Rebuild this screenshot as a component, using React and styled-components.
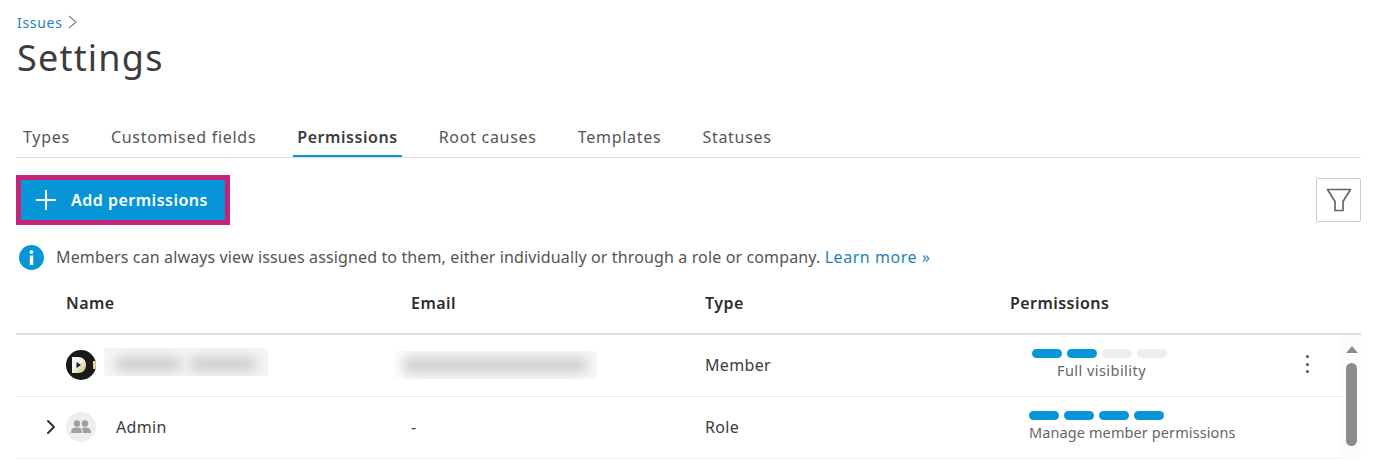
import React from 'react';
import styled, { createGlobalStyle } from 'styled-components';
import { ChevronRight } from 'lucide-react';

const GlobalStyle = createGlobalStyle`
  html, body { margin: 0; padding: 0; background: #fff; overflow: hidden; }
  body { font-family: "Noto Sans", "Open Sans", sans-serif; color: #3c3c3c; }
`;

const Page = styled.div`
  width: 1345px;
  height: 470px;
  padding-left: 16px;
  overflow: hidden;
`;

const Crumbs = styled.div`
  display: flex;
  align-items: center;
  gap: 5px;
  height: 20px;
  padding: 12px 0 0 1px;
  font-size: 14px;
  letter-spacing: 0.7px;
  color: #2a7fb8;
`;

const Title = styled.h1`
  margin: 0;
  height: 46px;
  line-height: 45px;
  padding: 3px 0 0 1px;
  font-size: 36px;
  font-weight: 400;
  letter-spacing: 1.2px;
  color: #3c3c3c;
`;

const Tabs = styled.div`
  display: flex;
  gap: 33px;
  margin-top: 42px;
  height: 34px;
  padding-left: 3px;
  border-bottom: 1px solid #dcdcdc;
`;

const Tab = styled.div`
  height: 34px;
  line-height: 28px;
  padding: 0 4px;
  font-size: 16px;
  letter-spacing: ${p => (p.$active ? 0.55 : 0.72)}px;
  font-weight: ${p => (p.$active ? 600 : 400)};
  color: ${p => (p.$active ? '#3c3c3c' : '#555')};
  box-sizing: border-box;
  border-bottom: ${p => (p.$active ? '2px solid #0696d7' : 'none')};
`;

const Toolbar = styled.div`
  display: flex;
  align-items: center;
  justify-content: space-between;
  margin-top: 17px;
  height: 50px;
`;

const AddButton = styled.button`
  display: flex;
  align-items: center;
  gap: 15px;
  box-sizing: border-box;
  width: 214px;
  height: 50px;
  padding: 0 0 0 15px;
  background: #0696d7;
  border: 5px solid #c4237a;
  color: #fff;
  font: 600 16px "Noto Sans", sans-serif;
  letter-spacing: 0.5px;
`;

const FilterButton = styled.button`
  display: flex;
  align-items: center;
  justify-content: center;
  box-sizing: border-box;
  width: 45px;
  height: 44px;
  margin-bottom: 1px;
  padding: 0;
  background: #fff;
  border: 1px solid #ccc;
  border-radius: 2px;
`;

const Notice = styled.div`
  display: flex;
  align-items: center;
  gap: 12px;
  margin-top: 18px;
  height: 28px;
  padding-left: 3px;
  font-size: 16px;
  letter-spacing: 0.13px;
  color: #555;
`;

const Link = styled.a`
  color: #1f7fbd;
  letter-spacing: 0.55px;
`;

const HeadRow = styled.div`
  display: grid;
  grid-template-columns: 395px 294px 305px 1fr;
  align-items: center;
  height: 64px;
  padding-top: 2px;
  box-sizing: border-box;
  border-bottom: 2px solid #dedede;
  font-size: 16px;
  font-weight: 600;
  letter-spacing: 0.45px;
  color: #2d2d2d;
`;

const HeadName = styled.div`
  padding-left: 50px;
`;

const Body = styled.div`
  display: flex;
`;

const Rows = styled.div`
  width: 1326px;
`;

const Row = styled.div`
  display: grid;
  grid-template-columns: 395px 294px 305px 1fr;
  align-items: center;
  height: 62px;
  padding-bottom: 2px;
  box-sizing: border-box;
  border-bottom: 1px solid #eee;
  font-size: 16px;
  letter-spacing: 0.35px;
  color: #3c3c3c;
`;

const NameCell = styled.div`
  display: flex;
  align-items: center;
  padding-left: 26px;
`;

const Expander = styled.div`
  display: flex;
  width: 24px;
  color: #333;
`;

const Avatar = styled.div`
  display: flex;
  align-items: center;
  justify-content: center;
  flex: none;
  width: 30px;
  height: 30px;
  margin-right: ${p => p.$gap}px;
  border-radius: 50%;
  overflow: hidden;
  background: ${p => (p.$dark ? '#1a1a1c' : '#eee')};
`;

const NameBlur = styled.div`
  display: flex;
  align-items: center;
  justify-content: center;
  gap: 8px;
  box-sizing: border-box;
  width: 164px;
  height: 28px;
  margin-bottom: 6px;
  padding-top: 5px;
  background: #f5f5f5;
  overflow: hidden;
`;

const EmailBlur = styled.div`
  display: flex;
  align-items: center;
  justify-content: center;
  width: 204px;
  height: 28px;
  margin-left: -18px;
  background: linear-gradient(90deg, #fff, #f7f7f7 8%);
  overflow: hidden;
`;

const Smudge = styled.div`
  width: ${p => p.$width}px;
  height: 14px;
  background: #cccccc;
  border-radius: 7px;
  filter: blur(6px);
`;

const Level = styled.div`
  display: inline-flex;
  flex-direction: column;
  align-items: center;
  justify-self: start;
  gap: 2px;
  margin-left: ${p => p.$indent}px;
  font-size: 14.5px;
  letter-spacing: ${p => p.$tracking}px;
  text-indent: ${p => p.$nudge || 0}px;
  color: #666;
  position: relative;
`;

const Pills = styled.div`
  display: flex;
  gap: 5px;
  align-self: ${p => (p.$start ? 'flex-start' : 'center')};
`;

const Pill = styled.span`
  width: 30px;
  height: 9px;
  border-radius: 5px;
  background: ${p => (p.$on ? '#0696d7' : '#eeeeee')};
`;

const Kebab = styled.div`
  display: flex;
  flex-direction: column;
  gap: 4.5px;
  position: absolute;
  left: 274px;
  top: 6px;
`;

const Dot = styled.span`
  width: 3px;
  height: 3px;
  border-radius: 50%;
  background: #555;
`;

const Track = styled.div`
  display: flex;
  flex-direction: column;
  align-items: center;
  width: 19px;
  padding-top: 11px;
  box-sizing: border-box;
  background: #fcfcfc;
`;

const Thumb = styled.div`
  width: 11px;
  height: 83px;
  margin-top: 10px;
  border-radius: 6px;
  background: #8c8c8c;
`;

const Arrow = styled.div`
  width: 0;
  height: 0;
  border-left: 6px solid transparent;
  border-right: 6px solid transparent;
  border-bottom: 7px solid #8c8c8c;
`;

const LevelBar = ({ on, start }) => (
  <Pills $start={start}>
    {[0, 1, 2, 3].map(i => (
      <Pill key={i} $on={i < on} />
    ))}
  </Pills>
);

const App = () => (
  <Page>
    <GlobalStyle />
    <Crumbs>
      Issues
      <svg width="9" height="14" viewBox="0 0 9 14" fill="none" stroke="#8a8a8a" strokeWidth="1.3">
        <path d="M1 1l7 6-7 6" />
      </svg>
    </Crumbs>
    <Title>Settings</Title>
    <Tabs>
      <Tab>Types</Tab>
      <Tab>Customised fields</Tab>
      <Tab $active>Permissions</Tab>
      <Tab>Root causes</Tab>
      <Tab>Templates</Tab>
      <Tab>Statuses</Tab>
    </Tabs>
    <Toolbar>
      <AddButton>
        <svg width="20" height="20" viewBox="0 0 20 20" stroke="#fff" strokeWidth="2">
          <path d="M10 0v20M0 10h20" />
        </svg>
        Add permissions
      </AddButton>
      <FilterButton aria-label="Filter">
        <svg width="26" height="26" viewBox="0 0 26 26" fill="none" stroke="#666" strokeWidth="1.7" strokeLinejoin="round">
          <path d="M1.5 2.500h23L17 14.500v9H9v-9z" />
        </svg>
      </FilterButton>
    </Toolbar>
    <Notice>
      <svg width="25" height="25" viewBox="0 0 25 25">
        <circle cx="12.5" cy="12.5" r="12.5" fill="#0696d7" />
        <circle cx="12.5" cy="7" r="2" fill="#fff" />
        <rect x="10.8" y="10.5" width="3.4" height="9.5" fill="#fff" />
      </svg>
      <span>
        Members can always view issues assigned to them, either individually or through a role or company.{' '}
        <Link>Learn more »</Link>
      </span>
    </Notice>
    <HeadRow>
      <HeadName>Name</HeadName>
      <div>Email</div>
      <div>Type</div>
      <div>Permissions</div>
    </HeadRow>
    <Body>
      <Rows>
        <Row>
          <NameCell>
            <Expander />
            <Avatar $dark $gap={8}>
              <svg width="30" height="30" viewBox="0 0 30 30">
                <defs>
                  <linearGradient id="logoFill" x1="0" y1="0" x2="1" y2="1">
                    <stop offset="0.4" stopColor="#f6f4ee" />
                    <stop offset="1" stopColor="#d9b871" />
                  </linearGradient>
                </defs>
                <path d="M6 7h6c5 0 8 3.500 8 8s-3 8-8 8H6z" fill="url(#logoFill)" />
                <path d="M10.500 12l4.500 3-4.500 3z" fill="#1a1a1c" />
                <path d="M27 11h3v8h-3z" fill="#e3d6a8" />
              </svg>
            </Avatar>
            <NameBlur>
              <Smudge $width={66} />
              <Smudge $width={68} />
            </NameBlur>
          </NameCell>
          <EmailBlur>
            <Smudge $width={186} />
          </EmailBlur>
          <div>Member</div>
          <Level $indent={22} $tracking={0.45} $nudge={4}>
            <LevelBar on={2} />
            Full visibility
            <Kebab>
              <Dot />
              <Dot />
              <Dot />
            </Kebab>
          </Level>
        </Row>
        <Row>
          <NameCell>
            <Expander>
              <ChevronRight size={24} strokeWidth={2} style={{ marginLeft: -3 }} />
            </Expander>
            <Avatar $gap={20}>
              <svg width="20" height="14" viewBox="0 0 20 14" fill="#a0a0a0">
                <circle cx="6" cy="3.5" r="3.2" />
                <circle cx="14" cy="3.5" r="3.2" />
                <path d="M0 13c0-4 2-5.5 6-5.5s5 1.500 5 5.500zM12 13c0-2-.4-3.800-1.200-5 .9-.4 2-.5 3.200-.5 4 0 6 1.500 6 5.500z" />
              </svg>
            </Avatar>
            Admin
          </NameCell>
          <div>-</div>
          <div>Role</div>
          <Level $indent={19} $tracking={0.1}>
            <LevelBar on={4} start />
            Manage member permissions
          </Level>
        </Row>
      </Rows>
      <Track>
        <Arrow />
        <Thumb />
      </Track>
    </Body>
  </Page>
);

export default App;
